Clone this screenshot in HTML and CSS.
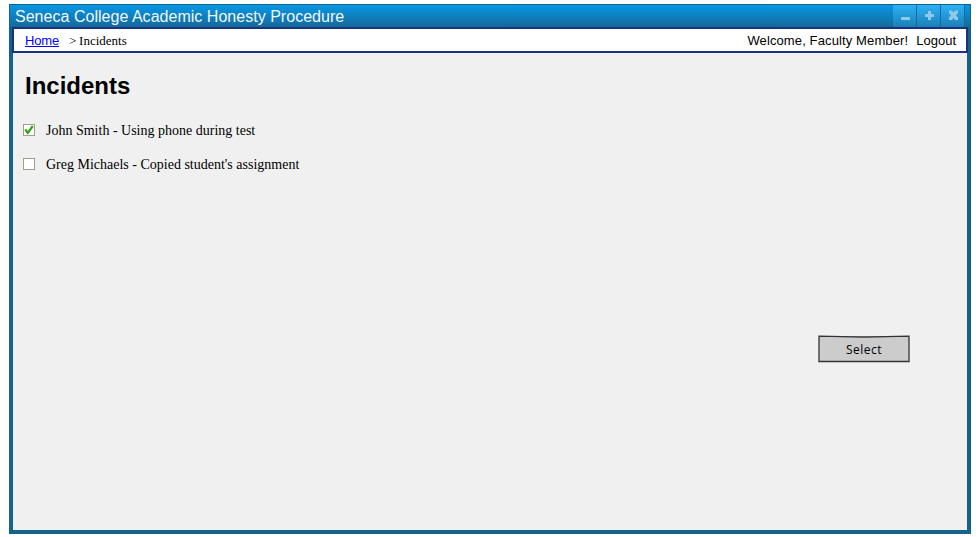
FILE: index.html
```html
<!DOCTYPE html>
<html lang="en">
<head>
<meta charset="utf-8">
<title>Seneca College Academic Honesty Procedure</title>
<link rel="stylesheet" href="styles.css">
</head>
<body>
<div class="window">
  <header class="titlebar">
    <span class="title">Seneca College Academic Honesty Procedure</span>
    <div class="controls">
      <span class="control"><svg width="24" height="22" viewBox="0 0 24 22"><rect x="8" y="12" width="9" height="3" rx=".5"/></svg></span>
      <span class="control"><svg width="24" height="22" viewBox="0 0 24 22"><path d="M11 6h3v3h3v3h-3v3h-3v-3H8V9h3z"/></svg></span>
      <span class="control"><svg width="24" height="22" viewBox="0 0 24 22"><path d="M8 5.500h3l1.500 2 1.500-2h3v2.500l-2 2.200 2 2.300v2.500h-3l-1.500-2-1.500 2H8v-2.500l2-2.300L8 8z"/></svg></span>
    </div>
  </header>
  <nav class="nav">
    <a class="home" href="#">Home</a>
    <span class="crumb">&gt; Incidents</span>
    <span class="welcome">Welcome, Faculty Member!</span>
    <span class="logout">Logout</span>
  </nav>
  <main class="content">
    <h1>Incidents</h1>
    <ul class="incidents">
      <li><span class="box"><svg width="12" height="12" viewBox="0 0 12 12"><path d="M2.300 5.300 4.800 8.800 9.800 2" fill="none" stroke="#2ca313" stroke-width="2.200"/></svg></span><span class="john">John Smith - Using phone during test</span></li>
      <li><span class="box"></span><span class="greg">Greg Michaels - Copied student's assignment</span></li>
    </ul>
    <button class="select" type="button">
      <svg class="sketch" width="92" height="28" viewBox="0 0 92 28"><path d="M1 1.200Q46 2.800 91 1.200V26.500H1z" fill="#ccc" stroke="#333" stroke-width="1.300"/></svg>
      <span class="label">Select</span>
    </button>
  </main>
</div>
</body>
</html>
```
FILE: styles.css
```css
* { box-sizing: border-box; }
body {
  margin: 0;
  padding: 4px 9px 3px;
  height: 537px;
  background: #fff;
  color: #000;
  font-family: "Liberation Sans", Arial, sans-serif;
}
.window {
  display: flex;
  flex-direction: column;
  width: 962px;
  height: 530px;
  background: #146389;
}
.titlebar {
  display: flex;
  justify-content: space-between;
  height: 23px;
  padding: 0 5px;
  border: solid #146389;
  border-width: 1px 1px 0;
  background: linear-gradient(#0797e6, #146a98);
}
.title {
  color: #f1f8fc;
  font-size: 16px;
  line-height: 23px;
  letter-spacing: .025px;
  white-space: nowrap;
}
.controls { display: flex; }
.control {
  width: 24px;
  height: 22px;
  border-right: 1px solid #146c9e;
  background: linear-gradient(#2cb1f7, #1b80b6);
}
.control svg { display: block; fill: #90c8e7; }
.nav {
  display: flex;
  height: 26px;
  margin: 0 3px;
  padding: 0 10px 0 11px;
  border: 2px solid #1d2f80;
  background: #fff;
  font-size: 13px;
  line-height: 23px;
  white-space: nowrap;
}
.home { width: 44px; color: #00f; letter-spacing: -.15px; }
.crumb {
  font: 13px/24px "Liberation Serif", "Times New Roman", serif;
  word-spacing: -.5px;
}
.welcome { margin-left: auto; letter-spacing: .12px; }
.logout { margin-left: 8px; }
.content {
  flex: 1;
  margin: 0 4px 4px;
  padding: 19px 10px 0;
  background: #f0f0f0;
}
h1 { margin: 0 0 0 2px; font-size: 24px; line-height: 28px; }
.incidents {
  margin: 13px 0 0;
  padding: 0;
  list-style: none;
  font: 14px/36px "Liberation Serif", "Times New Roman", serif;
}
.incidents li { display: flex; align-items: center; gap: 11px; height: 34px; }
.john, .greg { padding-top: 1px; }
.box {
  width: 12px;
  height: 12px;
  border: 1px solid #a69c8c;
  background: #fff;
}
.box svg { display: block; margin: -1px; }
.select {
  display: grid;
  place-items: center;
  width: 92px;
  height: 28px;
  margin: 154px 0 0 795px;
  padding: 0;
  border: 0;
  background: none;
  color: #000;
  font: 12px/26px "Open Sans", sans-serif;
  letter-spacing: .5px;
}
.select > * { grid-area: 1 / 1; }
.label { padding-top: 2px; }
```
